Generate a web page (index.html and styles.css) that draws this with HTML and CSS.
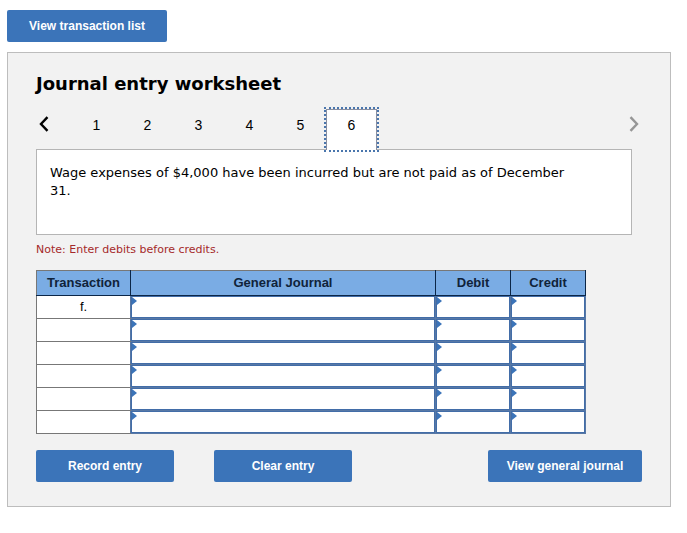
FILE: index.html
```html
<!DOCTYPE html>
<html lang="en">
<head>
<meta charset="utf-8">
<title>Journal entry worksheet</title>
<link rel="stylesheet" href="styles.css">
</head>
<body>
<button class="btn btn-list" type="button">View transaction list</button>
<main class="panel">
  <h1 class="title">Journal entry worksheet</h1>
  <nav class="pager" aria-label="Entries">
    <button class="arrow" type="button" aria-label="Previous entry">
      <svg width="10" height="16" viewBox="0 0 10 16" fill="none" stroke="#000" stroke-width="2.4"><path d="M8.5 1.2 2 8l6.500 6.800"/></svg>
    </button>
    <button class="tab" type="button">1</button>
    <button class="tab" type="button">2</button>
    <button class="tab" type="button">3</button>
    <button class="tab" type="button">4</button>
    <button class="tab" type="button">5</button>
    <button class="tab tab-current" type="button" aria-current="true">6</button>
    <button class="arrow arrow-next" type="button" aria-label="Next entry">
      <svg width="10" height="16" viewBox="0 0 10 16" fill="none" stroke="#969696" stroke-width="2.400"><path d="M1.500 1.200 8 8l-6.500 6.800"/></svg>
    </button>
  </nav>
  <p class="description">Wage expenses of $4,000 have been incurred but are not paid as of December 31.</p>
  <p class="note">Note: Enter debits before credits.</p>
  <table class="journal">
    <colgroup><col class="col-transaction"><col><col class="col-amount"><col class="col-amount"></colgroup>
    <thead>
      <tr><th scope="col">Transaction</th><th scope="col">General Journal</th><th scope="col">Debit</th><th scope="col">Credit</th></tr>
    </thead>
    <tbody>
      <tr><td>f.</td><td class="entry"><input type="text" aria-label="General Journal, row 1"></td><td class="entry"><input type="text" aria-label="Debit, row 1"></td><td class="entry"><input type="text" aria-label="Credit, row 1"></td></tr>
      <tr><td></td><td class="entry"><input type="text" aria-label="General Journal, row 2"></td><td class="entry"><input type="text" aria-label="Debit, row 2"></td><td class="entry"><input type="text" aria-label="Credit, row 2"></td></tr>
      <tr><td></td><td class="entry"><input type="text" aria-label="General Journal, row 3"></td><td class="entry"><input type="text" aria-label="Debit, row 3"></td><td class="entry"><input type="text" aria-label="Credit, row 3"></td></tr>
      <tr><td></td><td class="entry"><input type="text" aria-label="General Journal, row 4"></td><td class="entry"><input type="text" aria-label="Debit, row 4"></td><td class="entry"><input type="text" aria-label="Credit, row 4"></td></tr>
      <tr><td></td><td class="entry"><input type="text" aria-label="General Journal, row 5"></td><td class="entry"><input type="text" aria-label="Debit, row 5"></td><td class="entry"><input type="text" aria-label="Credit, row 5"></td></tr>
      <tr><td></td><td class="entry"><input type="text" aria-label="General Journal, row 6"></td><td class="entry"><input type="text" aria-label="Debit, row 6"></td><td class="entry"><input type="text" aria-label="Credit, row 6"></td></tr>
    </tbody>
  </table>
  <div class="actions">
    <button class="btn" type="button">Record entry</button>
    <button class="btn" type="button">Clear entry</button>
    <button class="btn btn-journal" type="button">View general journal</button>
  </div>
</main>
</body>
</html>
```
FILE: styles.css
```css
* {
  box-sizing: border-box;
}

body {
  margin: 0;
  padding: 10px 16px 26px 7px;
  background: #fff;
  color: #000;
  font-family: "Liberation Sans", Arial, sans-serif;
  font-size: 13px;
}

button {
  font-family: inherit;
  padding: 0;
  border: 0;
  background: none;
  color: inherit;
}

.btn {
  display: block;
  width: 138px;
  height: 32px;
  border-radius: 2px;
  background: #3b74b9;
  color: #fff;
  font-size: 12px;
  font-weight: bold;
}

.btn-list {
  width: 160px;
}

.panel {
  margin-top: 10px;
  padding: 20px 28px 24px;
  border: 1px solid #bdbdbd;
  background: #f2f2f2;
}

.title {
  margin: 0;
  font: bold 18px/22px Verdana, "DejaVu Sans", sans-serif;
}

.pager {
  display: flex;
  margin-top: 14px;
  height: 40px;
}

.arrow {
  width: 35px;
  padding: 7px 3px 0;
  text-align: left;
  align-self: flex-start;
}

.arrow svg {
  display: block;
}

.arrow-next {
  width: 16px;
  margin-left: auto;
}

.tab {
  width: 51px;
  padding-bottom: 8px;
  font-size: 14px;
}

/* One pixel taller than the row, so it covers the top border of the description. */
.tab-current {
  position: relative;
  height: 41px;
  padding-bottom: 10px;
  border: 1px solid #8a8fa0;
  border-bottom: 0;
  background: #fff;
  outline: 2px dotted #4a76ad;
}

.description {
  min-height: 86px;
  margin: 0 10px 0 0;
  padding: 14px 50px 14px 13px;
  border: 1px solid #b5b5b5;
  background: #fff;
  font: 13px/18px Verdana, "DejaVu Sans", sans-serif;
}

.note {
  margin: 7px 0 12px;
  color: #a52a2a;
  font: 11px/16px Verdana, "DejaVu Sans", sans-serif;
}

.journal {
  width: 550px;
  max-width: 100%;
  border-collapse: collapse;
  table-layout: fixed;
}

.col-transaction {
  width: 94px;
}

.col-amount {
  width: 75px;
}

.journal th {
  height: 25px;
  padding: 0 0 2px;
  border: 1px solid #0b2647;
  border-top-color: #777;
  background: #7aace4;
  color: #10233a;
}

.journal th:first-child {
  border-left-color: #777;
}

.journal td {
  height: 23px;
  padding: 0 0 2px;
  border: 1px solid #777;
  border-right-color: #5878a5;
  background: #fff;
  text-align: center;
}

.journal .entry {
  position: relative;
  padding: 1px 0 0 1px;
  border-color: #5878a5;
  background: #426da8;
}

.entry input {
  display: block;
  width: 100%;
  height: 21px;
  padding: 0 8px;
  border: 1px solid #426da8;
  border-width: 0 1px 1px 0;
  border-radius: 0;
  background: #fff;
  font: inherit;
}

.entry::before {
  content: "";
  position: absolute;
  top: 1px;
  left: 1px;
  border: 4px solid transparent;
  border-right: 0;
  border-left: 5px solid #3b74b9;
}

.actions {
  display: flex;
  gap: 40px;
  margin-top: 16px;
}

.btn-journal {
  width: 154px;
  margin-left: auto;
}
```
